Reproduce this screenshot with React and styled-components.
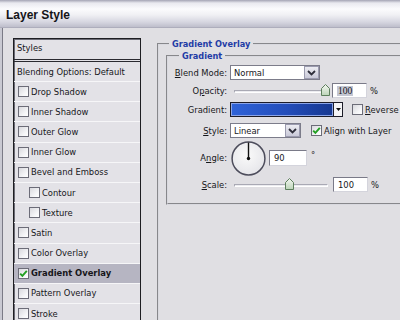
import React from "react";
import styled, { createGlobalStyle } from "styled-components";

const Global = createGlobalStyle`
  html, body { margin: 0; padding: 0; background: #e0dfe3; }
  body { font-family: "DejaVu Sans", Verdana, sans-serif; }
  * { box-sizing: border-box; }
`;

const Window = styled.div`
  width: 400px;
  height: 320px;
  overflow: hidden;
  background: #e0dfe3;
  display: flex;
  flex-direction: column;
`;

const TitleBar = styled.div`
  height: 28px;
  flex: none;
  padding: 2px 0 0 6px;
  background: linear-gradient(
    to bottom,
    #a4a4b4 0px,
    #e9e9ef 3px,
    #fbfbfd 9px,
    #f0f0f4 15px,
    #d6d6e0 22px,
    #bebecb 27px,
    #9d9dad 28px
  );
`;

const Title = styled.div`
  font-family: "Liberation Sans", Arial, sans-serif;
  font-weight: bold;
  font-size: 12px;
  line-height: 26px;
  color: #141418;
`;

const Body = styled.div`
  flex: 1;
  display: flex;
  gap: 16px;
  padding: 10px 0 0 13px;
  background: linear-gradient(
    to right,
    #c9c9d2 0 2px,
    #7a7a86 2px 3px,
    #e0dfe3 3px
  );
  overflow: hidden;
`;

const StylesPanel = styled.div`
  flex: none;
  width: 128px;
  height: 300px;
  border: 1px solid #1e1e22;
  box-shadow: inset 1px 1px 0 #6a6a74;
  background: #e3e2e7;
  display: flex;
  flex-direction: column;
  font-size: 8.4px;
  color: #16161a;
`;

const HeaderRow = styled.div`
  height: 23px;
  flex: none;
  display: flex;
  align-items: center;
  padding: 0 0 3px 3px;
  border-bottom: 3px double #2a2a30;
`;

const Row = styled.div`
  height: ${(p) => p.$h || 20.2}px;
  flex: none;
  display: flex;
  align-items: center;
  gap: 2px;
  padding-left: ${(p) => (p.$indent ? 15 : 4)}px;
  border-bottom: 1px solid #f6f6f8;
  background: ${(p) => (p.$selected ? "#b6b5c2" : "transparent")};
  font-weight: ${(p) => (p.$selected ? "bold" : "normal")};
`;

const TextRow = styled(Row)`
  padding-left: 3px;
`;

const Box = styled.span`
  flex: none;
  width: 11px;
  height: 11px;
  border: 1px solid #6c6c78;
  background: linear-gradient(135deg, #d9d9de 0%, #f7f7f9 70%, #ffffff 100%);
  display: inline-flex;
  align-items: center;
  justify-content: center;
`;

const CheckBox = ({ checked }) => (
  <Box>
    {checked && (
      <svg width="9" height="9" viewBox="0 0 9 9">
        <path
          d="M1.2 4.6 L3.4 6.9 L7.8 1.8"
          fill="none"
          stroke="#23a023"
          strokeWidth="1.9"
        />
      </svg>
    )}
  </Box>
);

const Main = styled.div`
  flex: none;
  width: 263px;
  padding-top: 1px;
`;

const Group = styled.fieldset`
  margin: 0;
  padding: 0;
  min-width: 0;
  border: 2px groove #d9d9df;
  border-right: none;
  height: ${(p) => p.$h}px;
  margin-left: ${(p) => p.$ml || 0}px;
  margin-top: ${(p) => p.$mt || 0}px;
`;

const Legend = styled.legend`
  margin-left: ${(p) => p.$ml}px;
  padding: 0 3px;
  font-size: 8.2px;
  line-height: 10px;
  font-weight: bold;
  color: #1f3ca6;
`;

const Form = styled.div`
  display: flex;
  flex-direction: column;
  padding: 4px 0 0 0;
  font-size: 8.4px;
  color: #16161a;
`;

const FormRow = styled.div`
  display: flex;
  align-items: center;
  height: ${(p) => p.$h || 15}px;
  margin-top: ${(p) => p.$mt || 0}px;
`;

const Label = styled.div`
  flex: none;
  width: 59px;
  margin-right: 3px;
  text-align: right;
  white-space: nowrap;
`;

const U = styled.span`
  text-decoration: underline;
`;

const SelectBox = styled.div`
  flex: none;
  width: ${(p) => p.$w}px;
  height: 15px;
  border: 1px solid #7c7c8a;
  background: #fff;
  display: flex;
  align-items: center;
  padding-left: 3px;
  margin-left: ${(p) => p.$ml || 0}px;
`;

const SelectText = styled.span`
  flex: 1;
`;

const DropButton = styled.div`
  flex: none;
  width: 15px;
  height: 13px;
  border: 1px solid #9a9aae;
  background: linear-gradient(#ececf2, #c9c9d8);
  display: flex;
  align-items: center;
  justify-content: center;
`;

const Select = ({ w, ml, children }) => (
  <SelectBox $w={w} $ml={ml}>
    <SelectText>{children}</SelectText>
    <DropButton>
      <svg width="9" height="6" viewBox="0 0 9 6">
        <path d="M1 1 L4.5 4.5 L8 1" fill="none" stroke="#2e2e3a" strokeWidth="1.8" />
      </svg>
    </DropButton>
  </SelectBox>
);

const SliderWrap = styled.div`
  position: relative;
  flex: none;
  width: 101px;
  height: 15px;
`;

const Track = styled.div`
  position: absolute;
  left: 4px;
  right: 3px;
  top: 7px;
  height: 3px;
  border-top: 1px solid #a9a9b4;
  border-left: 1px solid #a9a9b4;
  border-bottom: 1px solid #ffffff;
  border-right: 1px solid #ffffff;
  background: #ececf0;
`;

const Thumb = styled.svg`
  position: absolute;
  top: 1px;
  margin-left: -4.5px;
`;

const Slider = ({ value }) => (
  <SliderWrap>
    <Track />
    <Thumb width="9" height="12" viewBox="0 0 9 12" style={{ left: `${value}%` }}>
      <defs>
        <linearGradient id={`tg${value}`} x1="0" y1="0" x2="0" y2="1">
          <stop offset="0" stopColor="#f4f7f2" />
          <stop offset="1" stopColor="#bcd4b8" />
        </linearGradient>
      </defs>
      <path
        d="M0.5 11.5 V4.5 L4.5 0.5 L8.5 4.5 V11.5 Z"
        fill={`url(#tg${value})`}
        stroke="#5d7f5d"
        strokeWidth="1"
      />
    </Thumb>
  </SliderWrap>
);

const Input = styled.div`
  flex: none;
  width: ${(p) => p.$w || 35}px;
  height: ${(p) => p.$h || 15}px;
  margin-left: ${(p) => p.$ml || 0}px;
  border: 1px solid #7a7a88;
  border-right-color: #d4d4dc;
  border-bottom-color: #d4d4dc;
  background: #fff;
  display: flex;
  align-items: center;
  padding-left: 4px;
`;

const Highlight = styled.span`
  background: #c4c7d3;
  padding: 0 1px;
  font-family: "Liberation Serif", serif;
  font-size: 9.5px;
`;

const Unit = styled.span`
  margin-left: ${(p) => p.$ml || 3}px;
  align-self: ${(p) => (p.$top ? "flex-start" : "center")};
  padding-top: ${(p) => (p.$top ? 9 : 0)}px;
`;

const GradientSwatch = styled.div`
  flex: none;
  width: 104px;
  height: 15px;
  border: 1px solid #1c1c28;
  box-shadow: inset 0 0 0 1px #8aa4e8;
  background: linear-gradient(to right, #2f63d8, #234dba 55%, #163790);
`;

const GradButton = styled.div`
  flex: none;
  width: 9px;
  height: 15px;
  border: 1px solid #1c1c28;
  border-left: none;
  background: #f4f4f6;
  display: flex;
  align-items: center;
  justify-content: center;
`;

const CheckLabel = styled.label`
  display: flex;
  align-items: center;
  gap: 2px;
  margin-left: ${(p) => p.$ml}px;
  white-space: nowrap;
`;

const Dial = styled.svg`
  flex: none;
  margin-left: 1px;
`;

const items = [
  { name: "Drop Shadow" },
  { name: "Inner Shadow" },
  { name: "Outer Glow" },
  { name: "Inner Glow" },
  { name: "Bevel and Emboss" },
  { name: "Contour", indent: true },
  { name: "Texture", indent: true },
  { name: "Satin" },
  { name: "Color Overlay" },
  { name: "Gradient Overlay", selected: true },
  { name: "Pattern Overlay" },
  { name: "Stroke" },
];

export default function App() {
  return (
    <>
      <Global />
      <Window>
        <TitleBar>
          <Title>Layer Style</Title>
        </TitleBar>
        <Body>
          <StylesPanel>
            <HeaderRow>Styles</HeaderRow>
            <TextRow $h={20}>Blending Options: Default</TextRow>
            {items.map((it) => (
              <Row key={it.name} $indent={it.indent} $selected={it.selected}>
                <CheckBox checked={it.selected} />
                {it.name}
              </Row>
            ))}
          </StylesPanel>
          <Main>
            <Group $h={300}>
              <Legend $ml={10}>Gradient Overlay</Legend>
              <Group $ml={7} $mt={2} $h={154}>
                <Legend $ml={11}>Gradient</Legend>
                <Form>
                  <FormRow>
                    <Label>
                      <U>B</U>lend Mode:
                    </Label>
                    <Select w={90}>Normal</Select>
                  </FormRow>
                  <FormRow $mt={3}>
                    <Label>
                      O<U>p</U>acity:
                    </Label>
                    <Slider value={95} />
                    <Input $ml={1}>
                      <Highlight>100</Highlight>
                    </Input>
                    <Unit>%</Unit>
                  </FormRow>
                  <FormRow $mt={4}>
                    <Label>Gradient:</Label>
                    <GradientSwatch />
                    <GradButton>
                      <svg width="5" height="4" viewBox="0 0 5 4">
                        <path d="M0 0 H5 L2.5 3 Z" fill="#111" />
                      </svg>
                    </GradButton>
                    <CheckLabel $ml={9}>
                      <CheckBox />
                      <span>
                        <U>R</U>everse
                      </span>
                    </CheckLabel>
                  </FormRow>
                  <FormRow $mt={6}>
                    <Label>
                      <U>S</U>tyle:
                    </Label>
                    <Select w={71}>Linear</Select>
                    <CheckLabel $ml={10}>
                      <CheckBox checked />
                      <span>Align with Layer</span>
                    </CheckLabel>
                  </FormRow>
                  <FormRow $mt={3} $h={34}>
                    <Label>
                      A<U>n</U>gle:
                    </Label>
                    <Dial width="35" height="35" viewBox="0 0 35 35">
                      <defs>
                        <radialGradient id="dialfill" cx="0.45" cy="0.4" r="0.6">
                          <stop offset="0" stopColor="#fafafa" />
                          <stop offset="1" stopColor="#e6e6ea" />
                        </radialGradient>
                      </defs>
                      <circle
                        cx="17.5"
                        cy="17.5"
                        r="16.4"
                        fill="url(#dialfill)"
                        stroke="#4d4d5c"
                        strokeWidth="1.5"
                      />
                      <line x1="17.5" y1="17.5" x2="17.5" y2="1.5" stroke="#111" strokeWidth="1.4" />
                      <circle cx="17.5" cy="17.5" r="1.7" fill="#111" />
                    </Dial>
                    <Input $ml={3} $w={38} $h={16}>
                      90
                    </Input>
                    <Unit $ml={4} $top>
                      °
                    </Unit>
                  </FormRow>
                  <FormRow $mt={2}>
                    <Label>
                      <U>S</U>cale:
                    </Label>
                    <Slider value={59} />
                    <Input $ml={2}>100</Input>
                    <Unit>%</Unit>
                  </FormRow>
                </Form>
              </Group>
            </Group>
          </Main>
        </Body>
      </Window>
    </>
  );
}
